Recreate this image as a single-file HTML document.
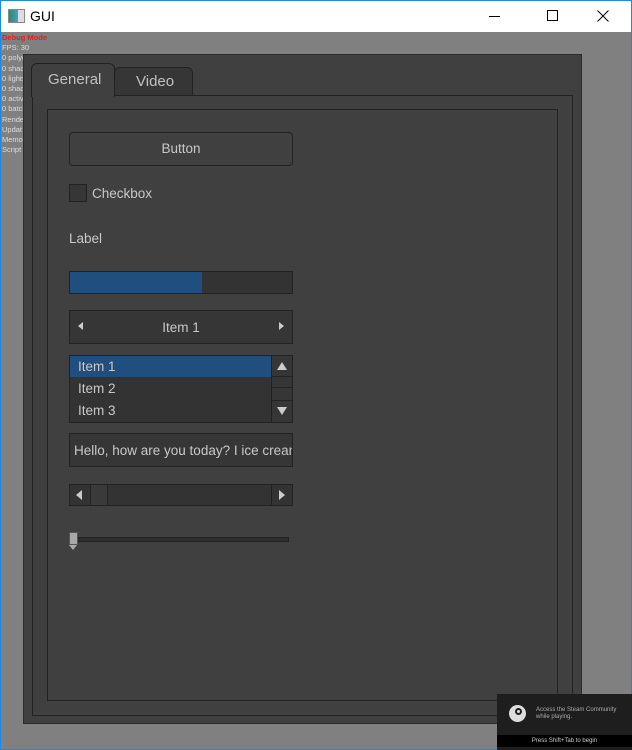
<!DOCTYPE html>
<html><head><style>
*{margin:0;padding:0;box-sizing:border-box}
body{width:632px;height:750px;overflow:hidden;background:#808080;font-family:"Liberation Sans",sans-serif;position:relative}
.a{position:absolute}
.t{color:#c8c8c8;font-size:13.5px}
</style></head><body>
<div class="a" style="left:0;top:0;width:632px;height:750px;border:1px solid #1e88e5;border-top:none"></div>
<div class="a" style="left:1px;top:0;width:630px;height:32px;background:#fff;border-top:1px solid #1e88e5"></div>
<div class="a" style="left:8px;top:9px;width:17px;height:14px;background:linear-gradient(90deg,#2a8a6a,#4aa0c0 60%,#ddd 60%);border:1px solid #888"></div>
<div class="a" style="left:30px;top:8px;font-size:14px;color:#000">GUI</div>
<div class="a" style="left:489px;top:16px;width:11px;height:1px;background:#000"></div>
<div class="a" style="left:547px;top:10px;width:11px;height:11px;border:1px solid #000"></div>
<svg class="a" style="left:597px;top:10px" width="12" height="12"><path d="M0.5 0.5L11.5 11.5M11.5 0.5L0.5 11.5" stroke="#000" stroke-width="1"/></svg>
<div class="a" style="left:2px;top:33px;font-size:7.5px;line-height:10.2px;color:#ddd">
<span style="color:#e02020;font-weight:bold">Debug Mode</span><br>FPS: 30<br>0 polyg<br>0 shad<br>0 lights<br>0 shad<br>0 activ<br>0 batch<br>Rende<br>Updat<br>Memo<br>Script</div>
<div class="a" style="left:23px;top:54px;width:559px;height:670px;background:#404040;border:1px solid #2b2b2b"></div>
<div class="a" style="left:114px;top:67px;width:79px;height:29px;background:#363636;border:1px solid #222;border-radius:6px 6px 0 0"></div>
<div class="a t" style="left:136px;top:73px;font-size:15px;color:#c0c0c0">Video</div>
<div class="a" style="left:32px;top:95px;width:541px;height:621px;border:1px solid #222"></div>
<div class="a" style="left:31px;top:63px;width:84px;height:34px;background:#404040;border:1px solid #222;border-bottom:none;border-radius:6px 6px 0 0"></div>
<div class="a t" style="left:48px;top:71px;font-size:15px;color:#c0c0c0">General</div>
<div class="a" style="left:47px;top:109px;width:511px;height:592px;border:1px solid #222"></div>
<div class="a" style="left:69px;top:132px;width:224px;height:34px;border:1px solid #222;border-radius:4px;background:#404040"></div>
<div class="a t" style="left:69px;top:141px;width:224px;text-align:center">Button</div>
<div class="a" style="left:69px;top:184px;width:18px;height:18px;background:#363636;border:1px solid #222"></div>
<div class="a t" style="left:92px;top:186px">Checkbox</div>
<div class="a t" style="left:69px;top:231px">Label</div>
<div class="a" style="left:69px;top:271px;width:224px;height:23px;background:#333;border:1px solid #222"></div>
<div class="a" style="left:70px;top:272px;width:132px;height:21px;background:#1f4e7f"></div>
<div class="a" style="left:69px;top:310px;width:224px;height:34px;background:#363636;border:1px solid #222"></div>
<div class="a t" style="left:69px;top:320px;width:224px;text-align:center">Item 1</div>
<div class="a" style="left:78px;top:322px;border:4px solid transparent;border-right:5px solid #ccc;border-left:none"></div>
<div class="a" style="left:279px;top:322px;border:4px solid transparent;border-left:5px solid #ccc;border-right:none"></div>
<div class="a" style="left:69px;top:355px;width:224px;height:68px;background:#333;border:1px solid #222"></div>
<div class="a" style="left:70px;top:356px;width:201px;height:21px;background:#1f4e7f"></div>
<div class="a t" style="left:78px;top:359px">Item 1</div>
<div class="a t" style="left:78px;top:381px">Item 2</div>
<div class="a t" style="left:78px;top:403px">Item 3</div>
<div class="a" style="left:271px;top:356px;width:21px;height:66px;background:#363636;border-left:1px solid #222"></div>
<div class="a" style="left:272px;top:376px;width:20px;height:12px;border-top:1px solid #222;border-bottom:1px solid #222"></div>
<div class="a" style="left:272px;top:400px;width:20px;height:1px;background:#222"></div>
<div class="a" style="left:277px;top:362px;border:5px solid transparent;border-bottom:8px solid #ccc;border-top:none"></div>
<div class="a" style="left:277px;top:407px;border:5px solid transparent;border-top:8px solid #ccc;border-bottom:none"></div>
<div class="a" style="left:69px;top:433px;width:224px;height:34px;background:#363636;border:1px solid #222;overflow:hidden">
<div class="t" style="position:absolute;left:4px;top:9px;white-space:nowrap">Hello, how are you today? I ice cream</div></div>
<div class="a" style="left:69px;top:484px;width:224px;height:22px;background:#333;border:1px solid #222"></div>
<div class="a" style="left:90px;top:485px;width:18px;height:20px;background:#3a3a3a;border-left:1px solid #222;border-right:1px solid #222"></div>
<div class="a" style="left:271px;top:485px;width:1px;height:20px;background:#222"></div>
<div class="a" style="left:76px;top:490px;border:5px solid transparent;border-right:6px solid #ccc;border-left:none"></div>
<div class="a" style="left:279px;top:490px;border:5px solid transparent;border-left:6px solid #ccc;border-right:none"></div>
<div class="a" style="left:69px;top:537px;width:220px;height:5px;background:#2e2e2e;border:1px solid #222"></div>
<div class="a" style="left:69px;top:532px;width:9px;height:13px;background:#a8a8a8;border:1px solid #555"></div>
<div class="a" style="left:69px;top:545px;border:4.5px solid transparent;border-top:5px solid #a8a8a8;border-bottom:none"></div>
<div class="a" style="left:497px;top:694px;width:135px;height:56px;background:#1e1e1e"></div>
<div class="a" style="left:497px;top:735px;width:135px;height:12px;background:#000"></div>
<div class="a" style="left:509px;top:705px;width:17px;height:17px;border-radius:50%;background:#ddd"></div>
<div class="a" style="left:515px;top:708px;width:7px;height:7px;border-radius:50%;border:2px solid #1e1e1e"></div>
<div class="a" style="left:536px;top:707px;font-size:6px;line-height:7px;color:#aaa">Access the Steam Community<br>while playing.</div>
<div class="a" style="left:497px;top:738px;width:135px;text-align:center;font-size:6px;color:#ccc">Press Shift+Tab to begin</div>
</body></html>
